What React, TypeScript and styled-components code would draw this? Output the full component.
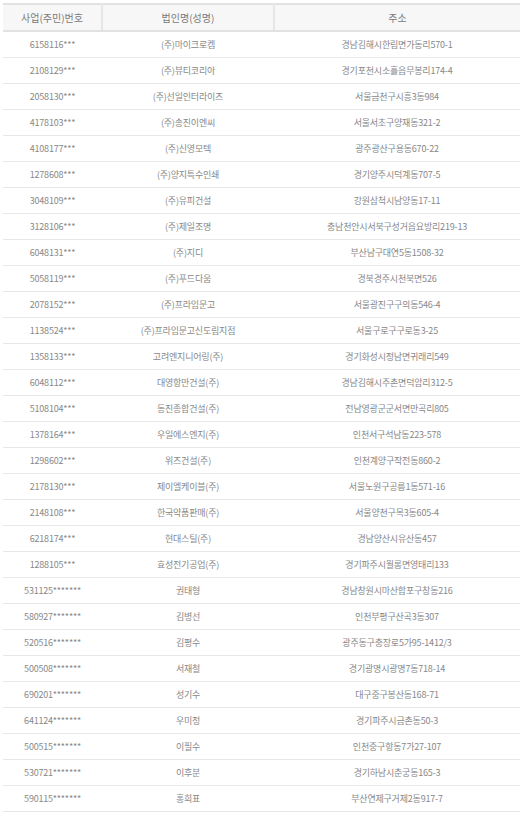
import styled, { createGlobalStyle } from "styled-components";

const GlobalStyle = createGlobalStyle`
  html, body {
    margin: 0;
    padding: 0;
    background: #ffffff;
  }
  body {
    font-family: "Noto Sans CJK KR", "Noto Sans", sans-serif;
  }
`;

type Row = [string, string, string];

const rows: Row[] = [
  ["6158116***", "(주)마이크로켐", "경남김해시한림면가동리570-1"],
  ["2108129***", "(주)뷰티코리아", "경기포천시소흘읍무봉리174-4"],
  ["2058130***", "(주)선일인터라이즈", "서울금천구시흥3동984"],
  ["4178103***", "(주)송진이엔씨", "서울서초구양재동321-2"],
  ["4108177***", "(주)신영모텍", "광주광산구용동670-22"],
  ["1278608***", "(주)양지특수인쇄", "경기양주시덕계동707-5"],
  ["3048109***", "(주)유피건설", "강원삼척시남양동17-11"],
  ["3128106***", "(주)제일조명", "충남천안시서북구성거읍요방리219-13"],
  ["6048131***", "(주)지디", "부산남구대연5동1508-32"],
  ["5058119***", "(주)푸드다움", "경북경주시천북면526"],
  ["2078152***", "(주)프라임문고", "서울광진구구의동546-4"],
  ["1138524***", "(주)프라임문고신도림지점", "서울구로구구로동3-25"],
  ["1358133***", "고려엔지니어링(주)", "경기화성시정남면귀래리549"],
  ["6048112***", "대영항만건설(주)", "경남김해시주촌면덕암리312-5"],
  ["5108104***", "동진종합건설(주)", "전남영광군군서면만곡리805"],
  ["1378164***", "우일에스엔지(주)", "인천서구석남동223-578"],
  ["1298602***", "위즈건설(주)", "인천계양구작전동860-2"],
  ["2178130***", "제이엘케이블(주)", "서울노원구공릉1동571-16"],
  ["2148108***", "한국약품판매(주)", "서울양천구목3동605-4"],
  ["6218174***", "현대스틸(주)", "경남양산시유산동457"],
  ["1288105***", "효성전기공업(주)", "경기파주시월롱면영태리133"],
  ["531125*******", "권태형", "경남창원시마산합포구창동216"],
  ["580927*******", "김병선", "인천부평구산곡3동307"],
  ["520516*******", "김평수", "광주동구충장로5가95-1412/3"],
  ["500508*******", "서재철", "경기광명시광명7동718-14"],
  ["690201*******", "성기수", "대구중구봉산동168-71"],
  ["641124*******", "우미정", "경기파주시금촌동50-3"],
  ["500515*******", "이필수", "인천중구항동7가27-107"],
  ["530721*******", "이후분", "경기하남시춘궁동165-3"],
  ["590115*******", "홍희표", "부산연제구거제2동917-7"],
];

const Page = styled.div`
  padding: 3px 0 0 3px;
`;

const Table = styled.table`
  width: 100%;
  border-collapse: collapse;
  table-layout: fixed;
  border-top: 2px solid #e2e2e2;
`;

const HeadCell = styled.th<{ $w?: number }>`
  width: ${(p) => (p.$w ? `${p.$w}px` : "auto")};
  height: 25px;
  padding: 0;
  background: #f7f7f7;
  border-bottom: 2px solid #e2e2e2;
  border-left: 2px solid #e6e6e6;
  font-size: 10px;
  font-weight: 400;
  color: #7a7a7a;
  text-align: center;

  &:first-child {
    border-left: none;
  }
`;

const Cell = styled.td`
  height: 25px;
  padding: 0;
  border-bottom: 1px solid #e8e8e8;
  font-size: 9px;
  letter-spacing: -0.2px;
  color: #888888;
  text-align: center;
  white-space: nowrap;
  overflow: hidden;
`;

export default function App() {
  return (
    <Page>
      <GlobalStyle />
      <Table>
        <thead>
          <tr>
            <HeadCell $w={98}>사업(주민)번호</HeadCell>
            <HeadCell $w={170}>법인명(성명)</HeadCell>
            <HeadCell>주소</HeadCell>
          </tr>
        </thead>
        <tbody>
          {rows.map(([no, name, addr]) => (
            <tr key={no + name}>
              <Cell>{no}</Cell>
              <Cell>{name}</Cell>
              <Cell>{addr}</Cell>
            </tr>
          ))}
        </tbody>
      </Table>
    </Page>
  );
}
